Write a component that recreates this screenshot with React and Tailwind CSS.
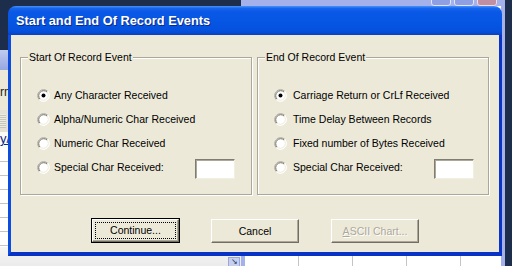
const Radio = ({ checked }) => (
  <svg width="13" height="13" viewBox="0 0 13 13" className="shrink-0">
    <circle cx="6.5" cy="6.5" r="6" fill="#ffffff" />
    <path d="M2.26 10.74 A6 6 0 0 1 10.74 2.26" fill="none" stroke="#aca899" strokeWidth="1" />
    <path d="M2.97 10.03 A5 5 0 0 1 10.03 2.97" fill="none" stroke="#716f64" strokeWidth="1" />
    <path d="M10.74 2.26 A6 6 0 0 1 2.26 10.74" fill="none" stroke="#ffffff" strokeWidth="1" />
    <path d="M10.03 2.97 A5 5 0 0 1 2.97 10.03" fill="none" stroke="#ece9d8" strokeWidth="1" />
    {checked && <circle cx="6.5" cy="6.5" r="2" fill="#000000" />}
  </svg>
);

const Row = ({ checked, label, box, textGap }) => (
  <div className="h-[24px] flex items-center">
    <Radio checked={checked} />
    <span className={"text-[10.5px] text-black leading-none whitespace-nowrap shrink-0 " + (textGap ? "ml-[6px]" : "ml-[4px]")}>{label}</span>
    {box && (
      <div className="self-end ml-auto shrink-0 w-[40px] h-[20px] bg-white border border-t-[#7f7d70] border-l-[#7f7d70] border-r-[#f1efe2] border-b-[#f1efe2] shadow-[inset_1px_1px_0_#aca899]" />
    )}
  </div>
);

const Group = ({ title, rows, padR, textGap }) => (
  <div className={"relative w-[232px] h-[138px] border border-[#aca899] shadow-[inset_1px_1px_0_#ffffff,1px_1px_0_#ffffff] pl-[16px] pt-[25px] flex flex-col " + padR}>
    <span className="absolute left-[7px] top-[-7px] bg-[#ece9d8] px-[1px] text-[10.5px] leading-[13px] text-black whitespace-nowrap">{title}</span>
    {rows.map((r, i) => (
      <Row key={i} checked={i === 0} label={r} box={i === 3} textGap={textGap} />
    ))}
  </div>
);

export default function App() {
  return (
    <div className="relative w-[512px] h-[266px] overflow-hidden bg-[#1c2e4c] font-['Liberation_Sans',Arial,sans-serif]">
      {/* background: left application window */}
      <div className="absolute left-0 top-[50px] w-[245px] h-[216px] flex flex-col bg-[#f4f4f2]">
        <div className="h-[20px] bg-gradient-to-b from-[#c0cbf0] to-[#97a7e0]" />
        <div className="h-[40px] bg-[#ece9d8] text-[12px] text-[#222] pt-[16px] leading-none">rm</div>
        <div className="h-[22px] bg-[#e4e2d6] flex items-center">
          <div className="w-[6px] h-[14px] bg-[repeating-linear-gradient(0deg,#c8c6ba_0px,#c8c6ba_1px,#ecebe3_1px,#ecebe3_2px)]" />
        </div>
        <div className="h-[16px] bg-[#fdfdf5] text-[13px] text-[#0a2a8a] leading-none underline pl-0">y/</div>
        <div className="h-[99px] bg-white bg-[repeating-linear-gradient(180deg,#ffffff_0px,#ffffff_13px,#c4c4c4_13px,#c4c4c4_14px)]" />
        <div className="flex-1 bg-gradient-to-b from-[#f6f6f6] to-[#ebebeb]" />
      </div>
      {/* background: right application window */}
      <div className="absolute left-[241px] top-[-20px] w-[264px] h-[290px] bg-[#a4b1ea] px-[4px] flex flex-col">
        <div className="h-[26px] flex justify-end items-end gap-[3px] pr-[4px]">
          <div className="w-[20px] h-[20px] rounded-[3px] bg-[#8f9fe4] border border-[#dfe4fa]" />
          <div className="w-[20px] h-[20px] rounded-[3px] bg-[#8f9fe4] border border-[#dfe4fa]" />
          <div className="w-[20px] h-[20px] rounded-[3px] bg-[#c08fa3] border border-[#efdbe2]" />
        </div>
        <div className="flex-1 bg-white bg-[repeating-linear-gradient(90deg,#ffffff_0px,#ffffff_53px,#c4c4c4_53px,#c4c4c4_54px)]" />
      </div>
      <div className="absolute left-[228px] top-[257px] w-[12px] h-[10px] bg-[#c6d0ee] border border-[#9aa8d8] text-[8px] leading-none text-[#1a2a60] flex items-center justify-center">↘</div>

      {/* dialog window */}
      <div className="absolute left-[8px] top-[6px] w-[494px] h-[250px] flex flex-col rounded-t-[8px] overflow-hidden">
        <div className="h-[29px] shrink-0 flex items-center pl-[8px] pt-[2px] bg-[linear-gradient(180deg,#4a93f8_0%,#1765ee_8%,#0a58e6_20%,#0655e3_55%,#0551de_85%,#0a3fc4_100%)]">
          <span className="text-white font-bold text-[12.8px] leading-none [text-shadow:1px_1px_0_#0b2a88]">
            Start and End Of Record Events
          </span>
        </div>
        <div className="flex-1 bg-[#ece9d8] border-l-[3px] border-r-[3px] border-b-[4px] border-l-[#0a4de0] border-r-[#0a34c6] border-b-[#0833c4] flex flex-col">
          <div className="flex gap-[5px] pl-[9px] pt-[22px]">
            <Group
              title="Start Of Record Event"
              rows={["Any Character Received", "Alpha/Numeric Char Received", "Numeric Char Received", "Special Char Received:"]}
              padR="pr-[16px]"
            />
            <Group
              title="End Of Record Event"
              rows={["Carriage Return or CrLf Received", "Time Delay Between Records", "Fixed number of Bytes Received", "Special Char Received:"]}
              padR="pr-[14px]"
              textGap
            />
          </div>
          <div className="flex justify-center items-start gap-[31px] mt-[23px]">
            <div className="w-[89px] h-[25px] border border-black">
              <div className="w-full h-full border border-t-white border-l-white border-r-[#716f64] border-b-[#716f64] shadow-[inset_-1px_-1px_0_#aca899] p-[2px]">
                <div className="w-full h-full border border-dotted border-black flex items-center justify-center text-[10.5px] text-black leading-none">
                  Continue...
                </div>
              </div>
            </div>
            <div className="w-[88px] h-[24px] mt-[1px] border border-t-white border-l-white border-r-[#716f64] border-b-[#716f64] shadow-[inset_-1px_-1px_0_#aca899] flex items-center justify-center text-[10.5px] text-black leading-none">
              Cancel
            </div>
            <div className="w-[88px] h-[24px] mt-[1px] ml-[1px] border border-t-white border-l-white border-r-[#716f64] border-b-[#716f64] shadow-[inset_-1px_-1px_0_#aca899] flex items-center justify-center text-[10.5px] text-[#aca899] leading-none [text-shadow:1px_1px_0_#ffffff]">
              <span><span className="underline">A</span>SCII Chart...</span>
            </div>
          </div>
        </div>
      </div>
    </div>
  );
}
